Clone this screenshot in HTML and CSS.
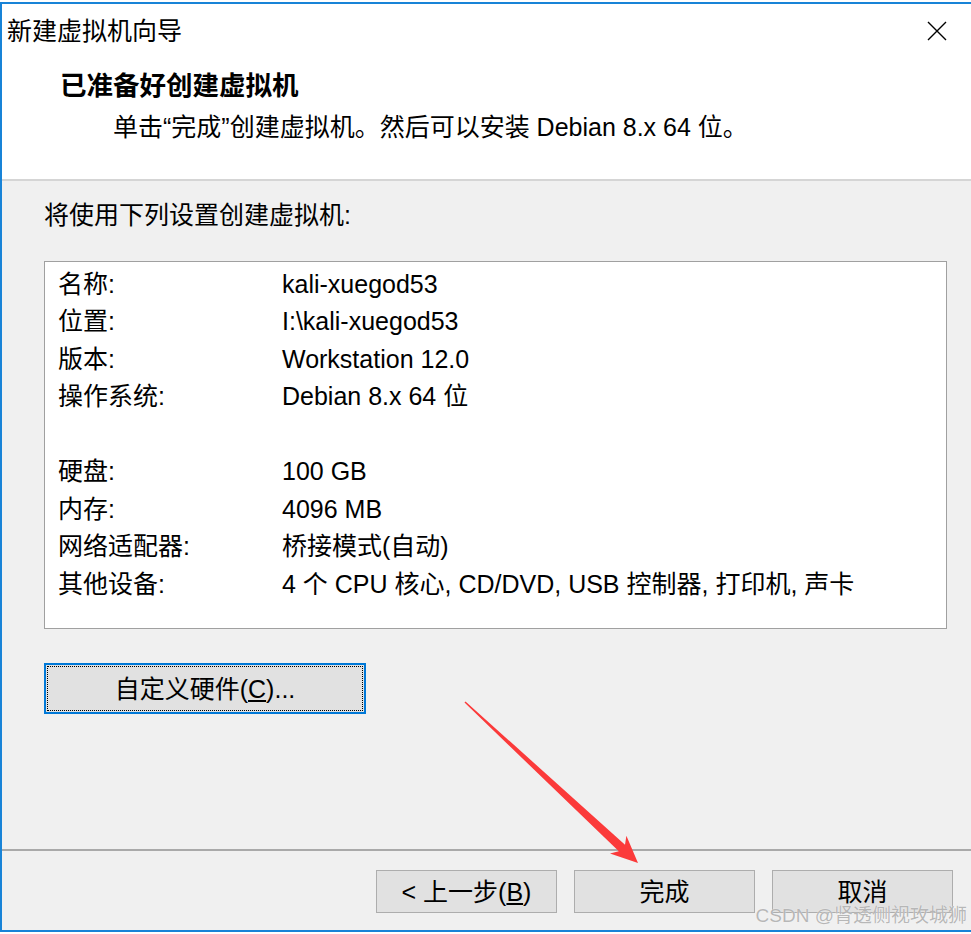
FILE: index.html
```html
<!DOCTYPE html>
<html lang="zh-CN">
<head>
<meta charset="utf-8">
<title>新建虚拟机向导</title>
<link rel="stylesheet" href="styles.css">
</head>
<body>
<div class="window">
  <div class="titlebar">
    <span class="title">新建虚拟机向导</span>
    <svg class="close" width="20" height="20" viewBox="0 0 20 20"><path d="M1 1L19 19M19 1L1 19" stroke="#000" stroke-width="1.4" fill="none"/></svg>
  </div>
  <div class="header">
    <h1 class="heading">已准备好创建虚拟机</h1>
    <p class="subtitle">单击“完成”创建虚拟机。然后可以安装 Debian 8.x 64 位。</p>
  </div>
  <div class="body">
    <p class="intro">将使用下列设置创建虚拟机:</p>
    <div class="summary">
      <span class="k">名称:</span><span class="v">kali-xuegod53</span>
      <span class="k">位置:</span><span class="v">I:\kali-xuegod53</span>
      <span class="k">版本:</span><span class="v">Workstation 12.0</span>
      <span class="k">操作系统:</span><span class="v">Debian 8.x 64 位</span>
      <span class="gap"></span>
      <span class="k">硬盘:</span><span class="v">100 GB</span>
      <span class="k">内存:</span><span class="v">4096 MB</span>
      <span class="k">网络适配器:</span><span class="v">桥接模式(自动)</span>
      <span class="k">其他设备:</span><span class="v">4 个 CPU 核心, CD/DVD, USB 控制器, 打印机, 声卡</span>
    </div>
    <button class="custom-btn">自定义硬件(<u>C</u>)...</button>
  </div>
  <div class="footer">
    <button class="btn">&lt; 上一步(<u>B</u>)</button>
    <button class="btn">完成</button>
    <button class="btn">取消</button>
  </div>
</div>
<svg class="arrow" width="971" height="934" viewBox="0 0 971 934">
  <polygon points="464.5,702.6 618.8,851.3 610,853.4 638,863 626.4,835.8 625,844.7 465.5,701.4" fill="#fb3a3a"/>
</svg>
<div class="watermark">CSDN @肾透侧视攻城狮</div>
</body>
</html>
```
FILE: styles.css
```css
html, body {
  margin: 0;
  padding: 0;
}
body {
  background: #fff;
  width: 971px;
  height: 934px;
  overflow: hidden;
  position: relative;
  font-family: "Liberation Sans", "Noto Sans CJK SC", sans-serif;
  color: #000;
}
.window {
  margin-top: 2px;
  border: 2px solid #1883d7;
  border-right: none;
  height: 926px;
  display: flex;
  flex-direction: column;
  background: #f0f0f0;
}
.titlebar {
  height: 54px;
  flex: none;
  display: flex;
  align-items: center;
  justify-content: space-between;
  padding: 0 24px 0 5px;
  background: #fff;
}
.title {
  font-size: 25px;
  line-height: 30px;
}
.close {
  display: block;
}
.header {
  flex: none;
  background: #fff;
  padding: 13px 0 37px;
  border-bottom: 2px solid #d5d5d5;
}
.heading {
  margin: 0 0 0 58px;
  font-size: 26.5px;
  font-weight: 700;
  line-height: 30px;
}
.subtitle {
  margin: 11px 0 0 111px;
  font-size: 25px;
  line-height: 30px;
}
.body {
  flex: 1;
  padding: 19px 24px 0 42px;
}
.intro {
  margin: 0;
  font-size: 25px;
  line-height: 30px;
}
.summary {
  margin-top: 31px;
  height: 368px;
  box-sizing: border-box;
  border: 1px solid #a0a0a0;
  background: #fff;
  padding: 3px 13px 0;
  display: grid;
  grid-template-columns: 224px 1fr;
  grid-auto-rows: 37.5px;
  align-items: center;
  align-content: start;
  font-size: 25px;
  line-height: 30px;
}
.gap {
  grid-column: 1 / -1;
}
.custom-btn {
  display: block;
  margin-top: 34px;
  width: 322px;
  height: 51px;
  padding: 0;
  border: 2px solid #0078d7;
  background: #e1e1e1;
  color: #000;
  font-family: inherit;
  font-size: 25px;
  line-height: 30px;
  outline: 1px dotted #000;
  outline-offset: -4px;
}
.footer {
  flex: none;
  box-sizing: border-box;
  height: 81px;
  border-top: 2px solid #a9a9a9;
  display: flex;
  justify-content: flex-end;
  align-items: flex-start;
  gap: 17px;
  padding: 19px 18px 0 0;
}
.btn {
  width: 181px;
  height: 43px;
  padding: 0;
  border: 1px solid #adadad;
  background: #e1e1e1;
  color: #000;
  font-family: inherit;
  font-size: 25px;
  line-height: 30px;
}
.arrow {
  position: absolute;
  left: 0;
  top: 0;
  pointer-events: none;
}
.watermark {
  position: absolute;
  right: 4px;
  top: 904px;
  font-size: 19px;
  line-height: 24px;
  color: rgba(160, 160, 160, 0.75);
  text-shadow: 0 0 1px #fff;
  white-space: nowrap;
}
```
